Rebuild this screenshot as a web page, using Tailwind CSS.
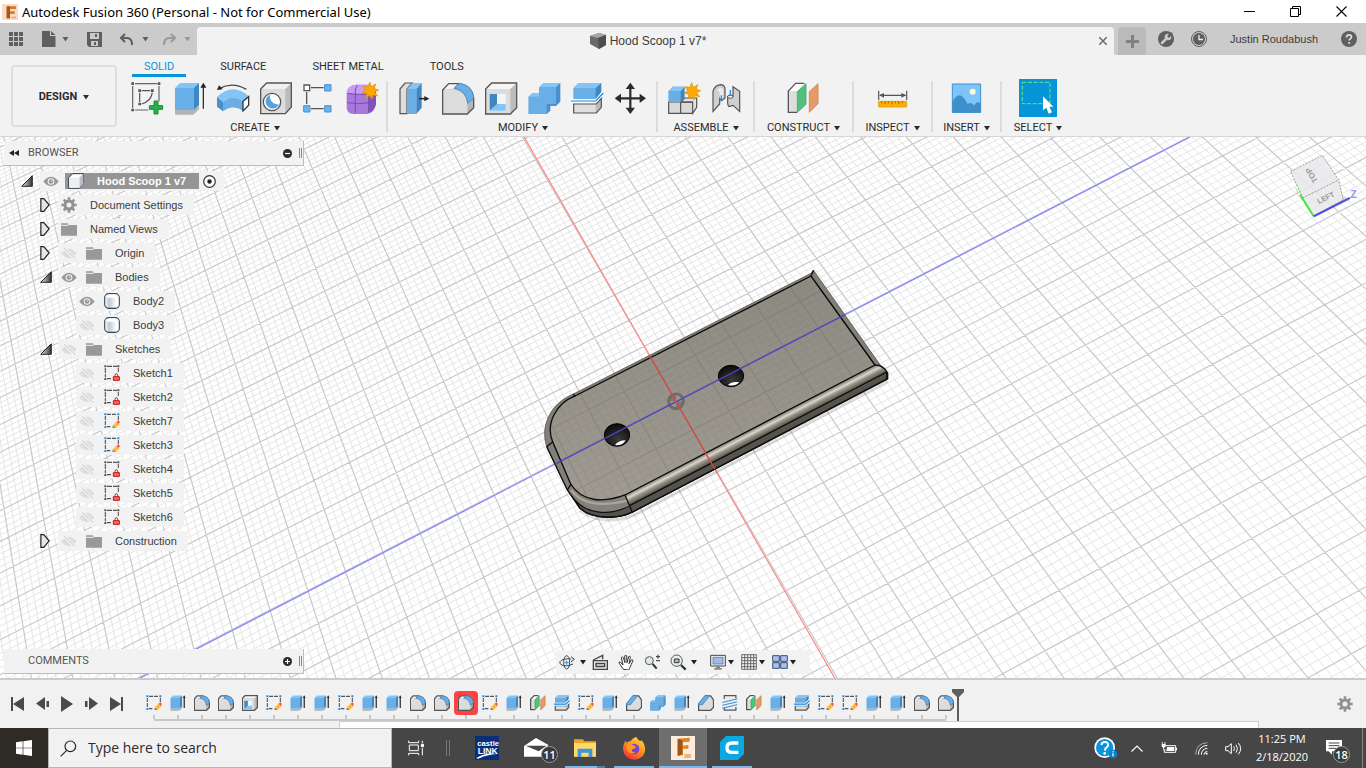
<!DOCTYPE html>
<html lang="en">
<head>
  <meta charset="UTF-8">
  <meta name="viewport" content="width=device-width, initial-scale=1.0">
  <title>Autodesk Fusion 360</title>
  <script src="https://cdn.jsdelivr.net/npm/@tailwindcss/browser@4"></script>
  <style>
    /* keep icon outlines crisp at every icon size */
    symbol * { vector-effect: non-scaling-stroke; }
  </style>
</head>
<body class="h-screen flex flex-col overflow-hidden bg-white font-['Liberation_Sans',Arial,sans-serif] text-[11px] leading-4 text-[#3c3c3c]">

  <!-- Icon set -->
  <svg class="absolute size-0">
    <symbol id="i-caret" viewBox="0 0 6 5"><path d="M0 0h6L3 4.5z" fill="currentColor"/></symbol>

    <symbol id="i-newsketch" viewBox="0 0 99 99">
      <path d="M12 5h66M5 12v66M84 12v46M12 84h40" fill="none" stroke="#666" stroke-width="1.2"/>
      <path d="M1 1h8v8H1zM80 1h8v8h-8zM1 80h8v8H1zM22 22h8v8h-8zM60 22h8v8h-8zM22 62h8v8h-8z" fill="#555"/>
      <path d="M32 26h26M26 32v28M64 32q-4 26-32 34" fill="none" stroke="#555" stroke-width="1.2"/>
      <path d="M69 57h12v14h14v11H81v14H69V82H55V71h14z" fill="#22b14c" stroke="#149036" stroke-width="1"/>
    </symbol>
    <symbol id="i-extrude" viewBox="0 0 99 99">
      <path d="M3 84h55l17-14v12L58 98H3z" fill="#b4b4b4"/>
      <path d="M3 18L18 3h57L59 18z" fill="#84c5f8"/>
      <path d="M3 18h56v66H3z" fill="#6aaee6"/>
      <path d="M59 18L75 3v66L59 84z" fill="#3f87c3"/>
      <path d="M88 12v68" fill="none" stroke="#222" stroke-width="1.2"/><path d="M88 2l-9 15h18z" fill="#222"/>
    </symbol>
    <symbol id="i-revolve" viewBox="0 0 99 99">
      <path d="M6 20Q46-2 88 22" fill="none" stroke="#444" stroke-width="1.3"/><path d="M0 24L6 10l11 12z" fill="#222"/>
      <path d="M0 45Q46 0 95 42L78 58Q46 34 18 60z" fill="#84c5f8"/>
      <path d="M0 45l18 15v28L0 74z" fill="#4a90cc"/>
      <path d="M18 60Q46 34 78 58v28Q46 66 18 88z" fill="#6aaee6"/>
      <path d="M78 58l17-14v26L78 87z" fill="#fff" stroke="#333" stroke-width="1.3"/>
    </symbol>
    <symbol id="i-hole" viewBox="0 0 99 99">
      <path d="M2 21L20 3h74v72L76 95H2z" fill="#bcbcbc"/><path d="M2 21h74v74H2z" fill="#dcdcdc"/><path d="M2 21L20 3h74L76 21z" fill="#f1f1f1"/>
      <path d="M2 21L20 3h74v72L76 95H2z" fill="none" stroke="#555" stroke-width="1.3"/>
      <circle cx="36" cy="60" r="26" fill="#fff" stroke="#555" stroke-width="1.3"/>
      <path d="M30 39a21 21 0 1 0 27 28A24 24 0 0 1 30 39z" fill="#5aa2de"/>
    </symbol>
    <symbol id="i-pattern" viewBox="0 0 99 99">
      <path d="M24 17h38M11 30v36M24 80h38" stroke="#555" stroke-width="1.3"/>
      <path d="M3 9h17v17H3z" fill="#fff" stroke="#555" stroke-width="1.3"/>
      <path d="M65 8h19v19H65zM2 71h19v19H2zM65 71h19v19H65z" fill="#6ab4ee" stroke="#4a90cc" stroke-width="1"/>
    </symbol>
    <symbol id="i-form" viewBox="0 0 99 99">
      <path d="M2 34Q4 10 30 8h34q26 4 26 20v38q-4 26-26 30H24Q4 96 2 78z" fill="#a878dc"/>
      <path d="M2 34Q4 10 30 8h34q22 2 26 18-18 12-34 10H2z" fill="#c79cf5"/>
      <path d="M68 34q18-4 22-12v44q-6 22-22 26z" fill="#8453b8"/>
      <path d="M34 10q-8 10-6 24v60M4 62q36 6 64 0 14-4 20-10M4 34q44 6 64 0v58" fill="none" stroke="#7a4bb0" stroke-width="1"/>
      <path d="M71 0l5 14 13-8-4 14 13 4-12 6 9 12-14-3-3 13-7-12-10 8 1-14-14-2 11-8-8-12 15 2z" fill="#ffa800" stroke="#d88c00" stroke-width=".6"/>
    </symbol>
    <symbol id="i-presspull" viewBox="0 0 99 99">
      <path d="M3 21L18 3h22L24 21v74H3z" fill="#dedede" stroke="#555" stroke-width="1.2"/>
      <path d="M24 21L40 3h28L52 21z" fill="#84c5f8"/><path d="M24 21h28v75H24z" fill="#6aaee6"/><path d="M52 21L68 3v74L52 96z" fill="#3f87c3"/>
      <path d="M60 50h20" stroke="#222" stroke-width="1.5"/><path d="M91 50L76 42v16z" fill="#222"/>
    </symbol>
    <symbol id="i-fillet" viewBox="0 0 99 99">
      <path d="M2 24L20 5h26q44 4 49 44v28L76 96H2z" fill="#b5b5b5"/>
      <path d="M2 24L20 5h26L34 20z" fill="#f4f4f4"/>
      <path d="M2 22h32q40 6 42 46v28H2z" fill="#dcdcdc"/>
      <path d="M2 24L20 5h26q44 4 49 44v28L76 96H2z" fill="none" stroke="#555" stroke-width="1.3"/>
      <path d="M36 18L52 4q38 4 44 44L77 64Q74 28 36 18z" fill="#6aaee6" stroke="#3f87c3" stroke-width=".8"/>
    </symbol>
    <symbol id="i-shell" viewBox="0 0 99 99">
      <path d="M2 21L20 3h75v74L76 96H2z" fill="#bcbcbc"/><path d="M2 21L20 3h75L76 21z" fill="#f6f6f6"/><path d="M2 21h74v75H2z" fill="#dcdcdc"/>
      <path d="M2 21L20 3h75v74L76 96H2z" fill="none" stroke="#555" stroke-width="1.3"/>
      <path d="M14 36h48v50H14z" fill="#f5f5f5"/><path d="M14 36h22v32L14 86z" fill="#3f87c3"/><path d="M14 86l22-20h26v20z" fill="#84c5f8"/>
    </symbol>
    <symbol id="i-combine" viewBox="0 0 99 99">
      <path d="M2 44L14 33h20V16L47 3h50v56L84 72H67v14L56 96H2z" fill="#4a90cc"/>
      <path d="M2 44h32V16h50v50H56v30H2z" fill="#6aaee6"/>
      <path d="M34 16L47 3h50L84 16zM2 44l12-11h20v11z" fill="#84c5f8"/>
    </symbol>
    <symbol id="i-split" viewBox="0 0 99 99">
      <path d="M8 18L23 3h68v26L76 50H8z" fill="#3f87c3"/><path d="M8 18h66v32H8z" fill="#6aaee6"/><path d="M8 18L23 3h68L74 18z" fill="#84c5f8"/>
      <path d="M8 66h68l15-17v27L76 93H8z" fill="#bcbcbc"/><path d="M8 66h66v27H8z" fill="#dedede"/>
      <path d="M8 66h68l15-17v27L76 93H8z" fill="none" stroke="#555" stroke-width="1.2"/>
      <path d="M0 57h74l23-24" fill="none" stroke="#fff" stroke-width="3"/><path d="M0 57h74l23-24" fill="none" stroke="#0a84ea" stroke-width="1.2"/>
    </symbol>
    <symbol id="i-move" viewBox="0 0 99 99">
      <path d="M49 14v70M14 49h70" stroke="#2b2b2b" stroke-width="2.2"/>
      <path d="M49 2l14 19H35zM49 96l14-19H35zM2 49l19-14v28zM96 49L77 35v28z" fill="#2b2b2b"/>
    </symbol>
    <symbol id="i-chamfer" viewBox="0 0 99 99">
      <path d="M4 56L46 6h32l18 24v46L78 95H4z" fill="#dcdcdc" stroke="#555" stroke-width="1.3"/>
      <path d="M4 52L42 4h30L28 60H4z" fill="#6aaee6" stroke="#3f87c3" stroke-width=".8"/>
    </symbol>
    <symbol id="i-thread" viewBox="0 0 99 99">
      <path d="M14 4h72v90H14z" fill="#ececec"/><path d="M14 24V4h72v16M14 78v16h72V74" fill="none" stroke="#555" stroke-width="1.2"/>
      <path d="M2 46l92-22M2 64l92-22M2 82l92-22" stroke="#2f8fe0" stroke-width="1"/>
    </symbol>
    <symbol id="i-component" viewBox="0 0 99 99">
      <path d="M2 60h82V76L72 94H2z" fill="#dadada" stroke="#555" stroke-width="1.2"/><path d="M38 60l12-12h36v28L74 94V60z" fill="#e4e4e4" stroke="#555" stroke-width="1.2"/><path d="M38 60v34M38 60h36" stroke="#555" stroke-width="1.2"/>
      <path d="M2 28L14 14h36v32L38 60H2z" fill="#3f87c3"/><path d="M2 28h36v32H2z" fill="#6aaee6"/><path d="M2 28l12-14h36L38 28z" fill="#84c5f8"/>
      <path d="M71 2l5 14 13-8-4 14 13 4-12 6 9 12-14-3-3 13-7-12-10 8 1-14-14-2 11-8-8-12 15 2z" fill="#ffa800" stroke="#d88c00" stroke-width=".6"/>
    </symbol>
    <symbol id="i-joint" viewBox="0 0 99 99">
      <path d="M6 28Q12 8 30 8q12 2 12 14v26l-10 8-6-8v18L6 88z" fill="#cfcfcf" stroke="#555" stroke-width="1.2"/>
      <path d="M18 24Q26 14 36 20v26l-10 4V30z" fill="#ececec"/>
      <path d="M66 14l20 14v60L66 70l-12 4q-4-4-4-10V44q6-6 16-2z" fill="#cfcfcf" stroke="#555" stroke-width="1.2"/>
      <ellipse cx="58" cy="44" rx="8" ry="5" fill="#f2f2f2" stroke="#555" stroke-width="1"/>
      <path d="M31 40v18M58 24v18" stroke="#2f8fe0" stroke-width="1.4"/>
    </symbol>
    <symbol id="i-construct" viewBox="0 0 99 99">
      <path d="M4 27L26 4h26L32 27v64H4z" fill="#dedede"/><path d="M4 27L26 4h26L32 27z" fill="#fff"/><path d="M52 4H26L4 27v64h26" fill="none" stroke="#555" stroke-width="1.3"/>
      <path d="M31 29L57 5v62L31 91z" fill="#55c07c" stroke="#3aa864" stroke-width=".8"/>
      <path d="M67 29L93 5v60L67 91z" fill="#e69a6a" stroke="#d07f48" stroke-width=".8"/>
    </symbol>
    <symbol id="i-measure" viewBox="0 0 99 99">
      <path d="M8 26v28M92 26v28M12 40h76" stroke="#555" stroke-width="1.2"/><path d="M9 40l15-7v14zM91 40l-15-7v14z" fill="#555"/>
      <path d="M8 58h84v17H8z" fill="#ffb000" stroke="#e09500" stroke-width=".8"/>
      <path d="M17 58v6M27 58v9M37 58v6M48 58v9M58 58v6M68 58v9M79 58v6" stroke="#7a5200" stroke-width=".8"/>
    </symbol>
    <symbol id="i-picture" viewBox="0 0 99 99">
      <path d="M7 6h85v85H7z" fill="#7cc4fa"/><circle cx="68" cy="29" r="9" fill="#fffbd0"/>
      <path d="M7 60q10-20 22-20 12 2 24 26 8-6 14-1l6 5q8-12 12-10l7 5v27H7z" fill="#3e90cc"/>
      <path d="M7 6h85v85H7z" fill="none" stroke="#3e90cc" stroke-width="1"/>
    </symbol>
    <symbol id="i-sketch" viewBox="0 0 48 48">
      <path d="M9 4h30M4 9v28M43 9v14M9 41h10" stroke="#555" stroke-width="1.1" stroke-dasharray="4 1"/>
      <path d="M1 1h6v6H1zM40 1h6v6h-6zM1 39h6v6H1z" fill="#1e8fe8"/>
      <path d="M25 45l2-9 9 9z" fill="#888"/><path d="M27 37l12-12 8 8-12 12z" fill="#ffb73e"/><path d="M38 26l5-4 5 5-4 5z" fill="#ee4d5a"/>
    </symbol>
    <symbol id="i-locked" viewBox="0 0 48 48">
      <path d="M9 4h30M4 9v28M43 9v12M9 41h12" stroke="#555" stroke-width="1.1" stroke-dasharray="5 1"/>
      <path d="M1 1h6v6H1zM40 1h6v6h-6zM1 39h6v6H1z" fill="#555"/>
      <path d="M33 35v-4q0-5 4-5t4 5v4" fill="none" stroke="#c22" stroke-width="1"/><path d="M28 35h18v11H28z" fill="#e07070" stroke="#c11" stroke-width="1"/>
    </symbol>
    <symbol id="i-body" viewBox="0 0 48 48">
      <rect x="2" y="2" width="44" height="44" rx="12" fill="url(#bodyGrad)" stroke="#33475c" stroke-width="1.1"/><path d="M5 12q19 6 38 0-3-8-11-8H16Q8 4 5 12z" fill="#fff"/>
    </symbol>
    <symbol id="i-folder" viewBox="0 0 48 40"><path d="M0 3h20l4 5h24v32H0z" fill="#999"/><path d="M0 9h22l3-4" fill="none" stroke="#f2f2f2" stroke-width="1"/></symbol>
    <symbol id="i-gear" viewBox="0 0 48 48">
      <circle cx="24" cy="24" r="12" fill="none" stroke="#919191" stroke-width="3"/>
      <path d="M24 1v9M24 38v9M1 24h9M38 24h9M8 8l6 6M34 34l6 6M40 8l-6 6M14 34l-6 6" stroke="#919191" stroke-width="2.6"/>
    </symbol>
    <symbol id="i-eye" viewBox="0 0 48 32">
      <path d="M1 16Q12 2 24 2t23 14Q36 30 24 30T1 16z" fill="#999"/><circle cx="24" cy="16" r="10" fill="#f2f2f2"/><circle cx="24" cy="16" r="7" fill="#999"/><circle cx="26" cy="14" r="2" fill="#f2f2f2"/>
    </symbol>
    <symbol id="i-eyeoff" viewBox="0 0 48 32">
      <path d="M1 16Q12 2 24 2t23 14Q36 30 24 30T1 16z" fill="#dedede"/><path d="M14 1l32 30M6 1l32 30" stroke="#f2f2f2" stroke-width="1.3"/><path d="M9 0l34 31" stroke="#ccc" stroke-width="1"/>
    </symbol>
    <linearGradient id="bodyGrad"><stop offset="0" stop-color="#fff"/><stop offset=".3" stop-color="#c4cad2"/><stop offset=".8" stop-color="#fff"/></linearGradient>
    <linearGradient id="openGrad"><stop offset="0" stop-color="#eee"/><stop offset="1" stop-color="#333"/></linearGradient>
    <symbol id="i-open" viewBox="0 0 33 33"><path d="M31 2v29H2z" fill="url(#openGrad)" stroke="#222" stroke-width="1"/></symbol>
    <symbol id="i-closed" viewBox="0 0 27 39"><path d="M2 2h8l15 17-15 18H2z" fill="#e6e6ea" stroke="#222" stroke-width="1.2"/></symbol>
  </svg>

  <!-- Title bar -->
  <header class="h-[23px] shrink-0 flex items-center bg-white text-black">
    <svg class="ml-[2px] size-4" viewBox="0 0 48 48"><path d="M0 0h48v48H0z" fill="#f9dcc4"/><path d="M14 7h28v8H24v7h14v8H24v13H14z" fill="#d57a2a"/><path d="M14 7h10v36H14z" fill="#a85518"/><path d="M28 38h14v5H28z" fill="#e9a877"/></svg>
    <h1 class="ml-1 text-[13px] font-['Noto_Sans','Open_Sans',sans-serif]">Autodesk Fusion 360 (Personal - Not for Commercial Use)</h1>
    <div class="ml-auto mr-[2px] flex h-full">
      <button aria-label="Minimize" class="w-[46px] grid place-items-center"><svg class="size-[11px]" viewBox="0 0 11 11"><path d="M0 5.5h11" stroke="#000"/></svg></button>
      <button aria-label="Restore" class="w-[46px] grid place-items-center"><svg class="size-[11px]" viewBox="0 0 11 11"><path d="M.5 2.5h8v8h-8zM2.500 2.500v-2h8v8h-2" fill="none" stroke="#000"/></svg></button>
      <button aria-label="Close" class="w-[46px] grid place-items-center"><svg class="size-[11px]" viewBox="0 0 11 11"><path d="M.5.5l10 10M10.500.5l-10 10" stroke="#000" stroke-width="1.1"/></svg></button>
    </div>
  </header>

  <!-- Quick access and document tab -->
  <div class="h-8 shrink-0 flex bg-[#cbcbcb] text-[#5f5f5f]">
    <div class="w-[197px] flex items-center">
      <button aria-label="Data panel" class="ml-[9px]"><svg class="block size-[15px]" viewBox="0 0 15 15"><path d="M0 0h4v4H0zM5 0h4v4H5zM10 0h4v4h-4zM0 5h4v4H0zM5 5h4v4H5zM10 5h4v4h-4zM0 10h4v4H0zM5 10h4v4H5zM10 10h4v4h-4z" fill="currentColor"/></svg></button>
      <button aria-label="File" class="ml-[18px] flex items-center gap-[6px]"><svg class="w-[14px] h-4" viewBox="0 0 14 16"><path d="M0 0h8v5h5.500v11H0zM9 0l4.500 4H9z" fill="currentColor"/></svg><svg class="w-[7px] h-[5px]"><use href="#i-caret"/></svg></button>
      <button aria-label="Save" class="ml-[18px]"><svg class="block size-[15px]" viewBox="0 0 15 15"><path d="M0 0h15v15H2l-2-2zM3 1v6h9V1zM4 9v5h7V9z" fill="currentColor" fill-rule="evenodd"/><path d="M7 10h2v3H7zM8 2h2v3H8z" fill="currentColor"/></svg></button>
      <button aria-label="Undo" class="ml-[18px] flex items-center gap-[8px]"><svg class="w-[14px] h-[13px]" viewBox="0 0 14 13"><path d="M5 1L1 5l4 4M1.500 5H7q5 0 5 7" fill="none" stroke="currentColor" stroke-width="2"/></svg><svg class="w-[7px] h-[5px]"><use href="#i-caret"/></svg></button>
      <button aria-label="Redo" class="ml-[13px] flex items-center gap-[8px] text-[#999]"><svg class="w-[14px] h-[13px]" viewBox="0 0 14 13"><path d="M9 1l4 4-4 4M12.500 5H7q-5 0-5 7" fill="none" stroke="currentColor" stroke-width="2"/></svg><svg class="w-[7px] h-[5px]"><use href="#i-caret"/></svg></button>
    </div>
    <div class="mt-1 flex-1 flex items-center rounded-t bg-[#f2f2f2]">
      <div class="flex-1 flex items-center justify-center gap-1 text-[12px] text-[#3c3c3c]">
        <svg class="size-4" viewBox="0 0 16 16"><path d="M0 3l9-3 7 2v10l-7 4-9-5z" fill="#6a6a6a"/><path d="M0 3l9-3 7 2-8 3z" fill="#a5a5a5"/><path d="M8 5l8-3v10l-7 4z" fill="#4d4d4d"/></svg>
        <span>Hood Scoop 1 v7*</span>
      </div>
      <button aria-label="Close tab" class="mr-[7px]"><svg class="block size-2" viewBox="0 0 8 8"><path d="M0 0l8 8M8 0L0 8" stroke="#6b6b6b" stroke-width="1.5"/></svg></button>
    </div>
    <button aria-label="New tab" class="ml-1 mt-1 w-7 grid place-items-center rounded-t bg-[#bababa]"><svg class="size-[13px]" viewBox="0 0 13 13"><path d="M6.500 0v13M0 6.500h13" stroke="#818181" stroke-width="3"/></svg></button>
    <div class="flex items-center">
      <button aria-label="Extensions" class="ml-3"><svg class="block size-4" viewBox="0 0 16 16"><circle cx="8" cy="8" r="8" fill="currentColor"/><path d="M4 12l5-5" stroke="#cbcbcb" stroke-width="2.500" stroke-linecap="round"/><circle cx="10" cy="6" r="3.300" fill="#cbcbcb"/><path d="M10 6l4-4" stroke="#5f5f5f" stroke-width="2.500"/></svg></button>
      <button aria-label="Job status" class="ml-[17px]"><svg class="block size-4" viewBox="0 0 16 16"><circle cx="8" cy="8" r="7.500" fill="none" stroke="currentColor"/><circle cx="8" cy="8" r="6" fill="currentColor"/><path d="M8 4v4.500h4" fill="none" stroke="#eee" stroke-width="1.300"/></svg></button>
      <button class="ml-[23px] w-[88px] text-left whitespace-nowrap text-[#3c3c3c]">Justin Roudabush</button>
      <button aria-label="Help" class="ml-[23px] mr-[9px]"><svg class="block size-4" viewBox="0 0 16 16"><circle cx="8" cy="8" r="8" fill="currentColor"/><path d="M5.500 6.500q0-2.700 2.500-2.700t2.500 2.200c0 1.600-2.300 1.700-2.300 3.600" fill="none" stroke="#ddd" stroke-width="1.700"/><circle cx="8.200" cy="12" r="1.100" fill="#ddd"/></svg></button>
    </div>
  </div>

  <!-- Ribbon -->
  <div class="h-[82px] shrink-0 flex bg-[#f2f2f2] border-b border-[#d6d6d6] text-[#2b2b2b] font-[Roboto,'Liberation_Sans',sans-serif]">
    <button class="ml-[11px] mt-[10px] w-[106px] h-[62px] pt-[2px] flex items-center justify-center gap-[6px] rounded border-2 border-[#dedede] font-bold">DESIGN <svg class="w-[6px] h-[5px]"><use href="#i-caret"/></svg></button>
    <div>
      <nav class="ml-[15px] h-[22px] flex gap-[22px]">
        <button class="px-[12px] pt-[4px] border-b-[3px] border-[#0696d7] text-[#0696d7]">SOLID</button>
        <button class="px-[12px] pt-[4px] border-b-[3px] border-transparent">SURFACE</button>
        <button class="px-[12px] pt-[4px] border-b-[3px] border-transparent">SHEET METAL</button>
        <button class="px-[12px] pt-[4px] border-b-[3px] border-transparent">TOOLS</button>
      </nav>
      <div id="ribbon" class="flex"></div>
    </div>
  </div>

  <!-- Canvas -->
  <main class="relative flex-1 min-h-0 overflow-hidden bg-white">
    <svg class="absolute inset-0 size-full" viewBox="0 137 1366 541" preserveAspectRatio="xMidYMid slice">
      <defs>
        <clipPath id="topFace"><path d="M843 48L1035 315 285 705C220 730 155 725 122 672L68 545C45 490 80 430 135 408z"/></clipPath>
        <clipPath id="bodyClip"><path d="M850 30L1058 325l15 13v19L310 755C265 778 190 780 150 745L112 690 50 560C30 500 60 430 130 402L843 40z"/></clipPath>
        <linearGradient id="faceGrad" x1="0" y1="0" x2="0" y2="1"><stop offset="0" stop-color="#8d8a82"/><stop offset="1" stop-color="#9f9b92"/></linearGradient>
        <linearGradient id="edgeGrad" gradientUnits="userSpaceOnUse" x1="660" y1="510" x2="674" y2="537"><stop offset="0" stop-color="#787469"/><stop offset=".4" stop-color="#dcd7cc"/><stop offset=".65" stop-color="#9a958a"/><stop offset="1" stop-color="#68655d"/></linearGradient>
        <radialGradient id="holeGrad" cx=".55" cy=".7" r=".7"><stop offset="0" stop-color="#3a3a38"/><stop offset="1" stop-color="#0a0a0a"/></radialGradient>
      </defs>
      <path id="gridMinor" fill="none" stroke="#e6e6e6"/>
      <path id="gridMajor" fill="none" stroke="#c9c9c9" stroke-width="1.200"/>
      <path d="M140 678L1190 137" stroke="#8686ff" stroke-width="1.300"/>
      <path d="M523 135L837 682" stroke="#ff8686" stroke-width="1.200"/>

      <!-- Hood scoop solid -->
      <g transform="translate(530 260) scale(.3333)" stroke-linejoin="round">
        <path d="M1073 364L316 764Q220 800 150 752" fill="none" stroke="#000" stroke-opacity=".12" stroke-width="10"/>
        <path d="M850 30L1058 325l15 13v19L310 755C265 778 190 780 150 745L112 690 50 560C30 500 60 430 130 402L843 40z" fill="#827f76" stroke="#444" stroke-width="2"/>
        <path d="M1070 336v21L310 755C265 778 190 780 150 745L125 705C160 765 240 770 298 737z" fill="#55534c" stroke="#111" stroke-width="4"/>
        <path d="M1035 315q25 0 35 21L298 737l-13-32z" fill="url(#edgeGrad)"/>
        <path d="M285 705l13 32C240 762 170 765 125 705L122 672C155 725 220 730 285 705z" fill="#85817a"/>
        <path d="M124 690Q165 752 292 722" fill="none" stroke="#aaa69b" stroke-width="7"/>
        <path d="M843 48L1035 315 285 705C220 730 155 725 122 672L68 545C45 490 80 430 135 408z" fill="url(#faceGrad)"/>
        <g clip-path="url(#topFace)">
          <g transform="scale(3) translate(-530 -260)" opacity=".1">
            <use href="#gridMinor" style="filter:brightness(.4)"/>
            <use href="#gridMajor" style="filter:brightness(.1)"/>
          </g>
        </g>
        <path d="M843 48L1035 315 285 705C220 730 155 725 122 672L68 545C45 490 80 430 135 408z" fill="none" stroke="#0a0a0a" stroke-width="4"/>
        <path d="M1035 315q25 0 38 24v18L310 755C265 778 190 780 150 745L112 690 50 560" fill="none" stroke="#111" stroke-width="4"/>
        <path d="M285 705l22 52M50 560l18-14M112 690l12-18M843 48l8-17M130 402l6 8M1070 336L298 737" fill="none" stroke="#111" stroke-width="4"/>
        <g fill="url(#holeGrad)" stroke="#000" stroke-width="3"><ellipse cx="603" cy="348" rx="38" ry="32"/><ellipse cx="261" cy="525" rx="38" ry="34"/></g>
        <path d="M594 375q12-12 34-8-14 14-34 8zM255 555q10-14 32-14-10 18-32 14z" fill="#fff"/>
        <circle cx="438" cy="424" r="22" fill="#7e7b74" stroke="#6e6b65" stroke-width="9"/>
        <path d="M438 424v-18a18 18 0 0 1 18 18zM438 424v18a18 18 0 0 1-18-18z" fill="#98958c"/>
        <g clip-path="url(#bodyClip)">
          <path d="M-1170 1254L1980-369" stroke="#4a45c4" stroke-width="4"/>
          <path d="M-21-375L921 1266" stroke="#dc4545" stroke-width="4"/>
        </g>
      </g>

      <!-- View cube -->
      <g transform="translate(1060 0) scale(.3333)">
        <path d="M764 652L870 600 850 588z" fill="#000" fill-opacity=".12"/>
        <path d="M692 514L787 466 836 540 850 600 760 648 728 594z" fill="#e9e9ec" fill-opacity=".85"/>
        <path d="M692 514L787 466 836 540 850 600 760 648 728 594zM728 594L836 540" fill="none" stroke="#888" stroke-width="2.500" stroke-dasharray="6 4"/>
        <path d="M720 584L761 649" stroke="#3fe83f" stroke-width="6"/>
        <path d="M761 649L870 594" stroke="#4b4be8" stroke-width="6"/>
        <text x="871" y="595" font-size="32" font-weight="700" fill="#9494f5">Z</text>
        <text x="704" y="578" font-size="22" fill="#86e886">Y</text>
        <text transform="translate(776 612) rotate(-26)" font-size="22" font-weight="700" fill="#999">LEFT</text>
        <text transform="translate(775 542) rotate(-122)" font-size="24" font-weight="700" fill="#999">TOP</text>
      </g>
    </svg>

    <!-- Browser tree -->
    <aside class="absolute left-1 top-1 w-[300px]">
      <div class="h-[25px] flex items-center bg-[#f2f2f2] border-r border-b border-[#bdbdbd] text-[#555]">
        <button aria-label="Collapse" class="ml-[5px]"><svg class="block w-[10px] h-[6px]" viewBox="0 0 10 6"><path d="M5 0v6L0 3zM10 0v6L5 3z" fill="#222"/></svg></button>
        <h2 class="ml-[9px] font-[Roboto,'Liberation_Sans',sans-serif]">BROWSER</h2>
        <button aria-label="Display settings" class="ml-auto"><svg class="block size-[9px]" viewBox="0 0 9 9"><circle cx="4.500" cy="4.500" r="4.500" fill="#2b2b2b"/><path d="M2 4.500h5" stroke="#fff" stroke-width="1.200"/></svg></button>
        <span class="ml-[7px] mr-[1px] w-[3px] h-[10px] border-x border-[#888]"></span>
      </div>
      <ul id="tree" class="mt-[3px]"></ul>
    </aside>

    <!-- Comments -->
    <aside class="absolute left-1 bottom-1 w-[300px] h-[25px] flex items-center bg-[#f2f2f2] border-r border-b border-[#bdbdbd] text-[#555]">
      <h2 class="ml-6 font-[Roboto,'Liberation_Sans',sans-serif]">COMMENTS</h2>
      <button aria-label="Add comment" class="ml-auto"><svg class="block size-[9px]" viewBox="0 0 9 9"><circle cx="4.500" cy="4.500" r="4.500" fill="#2b2b2b"/><path d="M2 4.500h5M4.500 2v5" stroke="#fff" stroke-width="1.200"/></svg></button>
      <span class="ml-[7px] mr-[1px] w-[3px] h-[10px] border-x border-[#888]"></span>
    </aside>

    <!-- Navigation bar -->
    <div class="absolute left-1/2 -translate-x-1/2 bottom-1 w-[254px] h-6 pl-[3px] flex items-center bg-[#f2f2f2] text-[#222]">
      <button aria-label="Orbit" class="flex items-center gap-[4px]"><svg class="w-[17px] h-4" viewBox="0 0 51 48" fill="none" stroke="#444" stroke-width="3"><ellipse cx="23" cy="25" rx="9" ry="20"/><path d="M40 16Q30 12 14 16-4 22 6 32q14 8 36-2"/><path d="M36 8l10 8-10 8" fill="#ddd"/><path d="M23 20v12M17 26h12" stroke="#1e8fe8"/></svg><svg class="w-[6px] h-[5px]"><use href="#i-caret"/></svg></button>
      <button aria-label="Look at" class="ml-[6px]"><svg class="block size-4" viewBox="0 0 48 48" fill="#eee" stroke="#444" stroke-width="4"><path d="M4 18L32 4v12M4 20h42v26H4z"/><path d="M12 28h26v10H12z" fill="#bbb"/></svg></button>
      <button aria-label="Pan" class="ml-[10px]"><svg class="block size-4" viewBox="0 0 48 48"><path d="M16 46L4 28q-3-6 4-3l7 8-5-22q3-6 6 0l5 15-1-20q3-6 6 0l1 20 5-18q5-4 5 2l-4 19 7-11q5-2 5 2-6 12-9 20l-4 8z" fill="#fff" stroke="#333" stroke-width="3" stroke-linejoin="round"/></svg></button>
      <button aria-label="Zoom" class="ml-[10px]"><svg class="block size-4" viewBox="0 0 48 48"><circle cx="16" cy="20" r="12" fill="#dceaf0" stroke="#555" stroke-width="3"/><path d="M26 30l12 14" stroke="#333" stroke-width="6"/><path d="M42 2v12M36 8h12M36 20h12" stroke="#333" stroke-width="3"/></svg></button>
      <button aria-label="Fit" class="ml-[10px] flex items-center gap-[4px]"><svg class="size-[17px]" viewBox="0 0 51 51"><circle cx="20" cy="20" r="17" fill="#e6eef2" stroke="#555" stroke-width="3"/><path d="M13 15h14v11H13z" fill="#bbb" stroke="#333" stroke-width="3"/><path d="M33 33l14 14" stroke="#333" stroke-width="7"/></svg><svg class="w-[6px] h-[5px]"><use href="#i-caret"/></svg></button>
      <button aria-label="Display" class="ml-[13px] flex items-center gap-[2px]"><svg class="w-4 h-4" viewBox="0 0 48 48"><path d="M2 4h44v32H2z" fill="#eee" stroke="#444" stroke-width="3"/><path d="M9 10h30v20H9z" fill="#9fbbe8" stroke="#4b689a" stroke-width="2"/><path d="M18 37h12v5h5v5H13v-5h5z" fill="#888"/></svg><svg class="w-[6px] h-[5px]"><use href="#i-caret"/></svg></button>
      <button aria-label="Grid" class="ml-[7px] flex items-center gap-[2px]"><svg class="w-4 h-4" viewBox="0 0 48 48"><path d="M2 2h44v44H2zM11 2v44M20 2v44M29 2v44M38 2v44M2 11h44M2 20h44M2 29h44M2 38h44" fill="#eee" stroke="#555" stroke-width="2.500"/></svg><svg class="w-[6px] h-[5px]"><use href="#i-caret"/></svg></button>
      <button aria-label="Viewports" class="ml-[7px] flex items-center gap-[2px]"><svg class="w-4 h-4" viewBox="0 0 48 48"><path d="M2 5h20v17H2zM26 5h20v17H26zM2 26h20v17H2zM26 26h20v17H26z" fill="#a9c0ea" stroke="#3e4f78" stroke-width="3"/></svg><svg class="w-[6px] h-[5px]"><use href="#i-caret"/></svg></button>
    </div>
  </main>

  <!-- Timeline -->
  <section class="relative h-[50px] shrink-0 flex border-t-2 border-[#cbcbcb] bg-[#f1f1f1]">
    <div class="w-[142px] h-[47px] pl-[11px] flex items-center gap-[12px] text-[#4a4a4a]">
      <button aria-label="Start"><svg class="block w-[13px] h-[14px]" viewBox="0 0 13 14"><path d="M0 0h2v14H0zM13 0v14L2 7z" fill="currentColor"/></svg></button>
      <button aria-label="Step back"><svg class="block w-[13px] h-[13px]" viewBox="0 0 13 13"><path d="M9 0v13L0 6.500zM10.500 4H13v6h-2.500z" fill="currentColor"/></svg></button>
      <button aria-label="Play"><svg class="block w-[12px] h-4" viewBox="0 0 12 16"><path d="M0 0l12 8-12 8z" fill="currentColor"/></svg></button>
      <button aria-label="Step forward"><svg class="block w-[13px] h-[13px]" viewBox="0 0 13 13"><path d="M4 0l9 6.500L4 13zM0 4h2.500v6H0z" fill="currentColor"/></svg></button>
      <button aria-label="End"><svg class="block w-[13px] h-[14px]" viewBox="0 0 13 14"><path d="M11 0h2v14h-2zM0 0l11 7L0 14z" fill="currentColor"/></svg></button>
    </div>
    <div id="timeline" class="pt-[11px] flex"></div>
    <svg class="mt-[9px] w-3 h-8 -ml-[6px]" viewBox="0 0 12 32"><path d="M0 0h12v3L7 8v24H5V8L0 3z" fill="#5e5e5e"/></svg>
    <button aria-label="Timeline settings" class="ml-auto mr-[13px] h-[47px]"><svg class="block size-4"><use href="#i-gear"/></svg></button>
    <div class="absolute left-[339px] right-[107px] bottom-0 h-[7px] border border-b-0 border-[#cfcfcf] bg-white"></div>
  </section>

  <!-- Taskbar -->
  <footer class="h-10 shrink-0 flex bg-[#464646] text-white font-['Open_Sans','Noto_Sans',sans-serif]">
    <button aria-label="Start menu" class="w-12 grid place-items-center bg-[#2e2b27]"><svg class="size-4" viewBox="0 0 48 48"><path d="M0 7l20-3v19H0zM22 4l26-4v23H22zM0 25h20v19L0 41zM22 25h26v23l-26-4z" fill="#fff"/></svg></button>
    <label class="w-[344px] flex items-center border border-[#b5b5b5] bg-[#f2f2f2] pl-[11px]">
      <svg class="size-[17px]" viewBox="0 0 51 51"><circle cx="31" cy="19" r="16" fill="none" stroke="#222" stroke-width="3.500"/><path d="M20 31L2 49" stroke="#222" stroke-width="3.500"/></svg>
      <input type="text" aria-label="Search" placeholder="Type here to search" class="ml-[11px] w-[280px] bg-transparent text-[14px] leading-5 placeholder:text-[#2b2b2b] outline-none">
    </label>
    <button aria-label="Task view" class="w-12 grid place-items-center"><svg class="size-4" viewBox="0 0 48 48" fill="none" stroke="#fff" stroke-width="3"><path d="M2 2v6h30V2M4 15h27v17H4zM2 46v-6h30v6M43 2v8M43 24v22"/><path d="M40 13h7v7h-7z" fill="#fff"/></svg></button>
    <span class="self-center ml-[6px] w-1 h-4 border-x border-[#777]"></span>
    <div class="ml-[13px] flex gap-px">
      <button aria-label="CastleLink" class="w-12 grid place-items-center"><svg class="size-6" viewBox="0 0 72 72"><path d="M0 0h72v72H0z" fill="#0a2f78"/><g fill="#fff" font-family="Liberation Sans" font-weight="700"><text x="7" y="29" font-size="23">castle</text><text x="8" y="53" font-size="26">LINK</text></g><path d="M3 67Q30 47 70 54q-30 0-60 14z" fill="#fff"/></svg></button>
      <button aria-label="Mail" class="relative w-12 grid place-items-center"><svg class="w-6 h-5" viewBox="0 0 72 60"><path d="M0 24L36 0l36 20v36H0z" fill="#fff"/><path d="M5 23h62L44 40z" fill="#464646"/></svg><span class="absolute left-[29px] top-[18px] size-[17px] rounded-full border border-[#999] bg-[#3a3a3a] text-[11px] leading-[15px] text-center font-semibold">11</span></button>
      <button aria-label="File Explorer" class="relative w-12 grid place-items-center"><svg class="w-[22px] h-5" viewBox="0 0 66 60"><path d="M0 4h26l6 6h34v46H0z" fill="#e8a92a"/><path d="M0 15h66v41H0z" fill="#ffd868"/><path d="M11 32h44v25H44V44H22v13H11z" fill="#3c96dd"/></svg><span class="absolute bottom-0 left-1 w-8 h-[2px] bg-[#76b9ed]"></span><span class="absolute bottom-0 left-9 w-2 h-[2px] bg-[#557fa0]"></span></button>
      <button aria-label="Firefox" class="relative w-12 grid place-items-center"><svg class="size-6" viewBox="0 0 72 72"><defs><linearGradient id="fox" x1=".8" y1="0" x2=".2" y2="1"><stop offset="0" stop-color="#ffe03a"/><stop offset=".5" stop-color="#ff8a1c"/><stop offset="1" stop-color="#f0264e"/></linearGradient></defs><path d="M42 2q6 10 14 14l2-4q14 16 11 34-6 24-32 25Q6 69 3 40 3 24 12 13l1 8q6-6 13-6 4-8 16-13z" fill="url(#fox)"/><circle cx="36" cy="39" r="16" fill="#7542e4"/><path d="M14 26q10-6 20 2 6 2 8 6-4 6-12 6-4 10 12 10-22 8-28-10z" fill="#ff9a1c"/></svg><span class="absolute bottom-0 left-1 w-10 h-[2px] bg-[#76b9ed]"></span></button>
      <button aria-label="Fusion 360" class="relative w-12 grid place-items-center bg-[#6e6e6e]"><svg class="size-6" viewBox="0 0 72 72"><path d="M0 0h72v72H0z" fill="#fdebdc"/><path d="M20 8l36-3v12l-20 2v10l16-2v11H36v20l-16 2z" fill="#d9852c"/><path d="M20 8l14 4v42l-14 6z" fill="#9c5417"/><text x="38" y="66" font-size="13" font-weight="700" fill="#e58a3c">360</text></svg><span class="absolute bottom-0 inset-x-0 h-[2px] bg-[#76b9ed]"></span></button>
      <button aria-label="Cura" class="relative w-12 grid place-items-center"><svg class="size-6" viewBox="0 0 72 72"><path d="M18 0h54v54L54 72H0V18z" fill="#0ca8e2"/><path d="M55 21H36q-15 0-15 14t15 14h19" fill="none" stroke="#fff" stroke-width="10"/></svg><span class="absolute bottom-0 left-1 w-10 h-[2px] bg-[#76b9ed]"></span></button>
    </div>
    <div class="ml-auto flex items-center">
      <button aria-label="Support" class="mr-[13px]"><svg class="block w-6 h-[22px]" viewBox="0 0 72 66"><circle cx="32" cy="32" r="31" fill="#fff"/><circle cx="32" cy="32" r="26" fill="#0a94dc"/><path d="M22 24q2-10 12-9 10 2 8 11-2 5-8 9l-1 6" fill="none" stroke="#fff" stroke-width="6"/><circle cx="32" cy="49" r="4" fill="#fff"/><circle cx="57" cy="51" r="13" fill="#0a7fd0"/><path d="M57 49v9M57 43v3" stroke="#fff" stroke-width="4"/></svg></button>
      <button aria-label="Show hidden icons" class="mr-[18px]"><svg class="block w-3 h-[7px]" viewBox="0 0 12 7"><path d="M.5 6.500L6 1l5.500 5.500" fill="none" stroke="#fff" stroke-width="1.200"/></svg></button>
      <button aria-label="Battery" class="mr-[18px]"><svg class="block w-4 h-3" viewBox="0 0 48 36"><path d="M14 11h30v20H10v-8" fill="none" stroke="#fff" stroke-width="3"/><path d="M18 15h22v12H16zM45 17h3v8h-3zM2 6h12v8l-6 4-6-4z" fill="#fff"/><path d="M4 0v6M12 0v6M8 16v8h6" fill="none" stroke="#fff" stroke-width="2.500"/></svg></button>
      <button aria-label="Network" class="mr-[17px]"><svg class="block size-[13px]" viewBox="0 0 39 39" fill="none" stroke="#fff" stroke-width="3"><path d="M2 38Q3 4 37 2" stroke="#aaa"/><path d="M10 38q1-26 27-28M19 38q1-18 18-19M27 38q1-9 10-10"/><circle cx="35" cy="35" r="2" fill="#fff"/></svg></button>
      <button aria-label="Volume" class="mr-[13px]"><svg class="block w-[17px] h-[13px]" viewBox="0 0 51 39" fill="none" stroke="#fff" stroke-width="3"><path d="M2 14h7l10-9v30L9 26H2zM26 13q5 7 0 14M33 8q9 12 0 24M40 3q14 17 0 34"/></svg></button>
      <time class="w-[54px] text-[11px] leading-[18px] whitespace-nowrap flex flex-col items-center"><span>11:25 PM</span><span>2/18/2020</span></time>
      <button aria-label="Notifications" class="relative ml-[17px] mr-[11px] h-10 w-[25px]"><svg class="absolute left-0 top-3 w-4 h-[15px]" viewBox="0 0 48 45"><path d="M0 0h48v34H18v10L8 34H0z" fill="#fff"/><path d="M8 9h32M8 17h32M8 25h22" stroke="#444" stroke-width="3"/></svg><span class="absolute left-[7px] top-[18px] size-[17px] rounded-full border border-[#999] bg-[#3a3a3a] text-[11px] leading-[15px] text-center font-semibold">18</span></button>
      <span class="w-1 h-10 border-l border-[#888]"></span>
    </div>
  </footer>

  <script>
    // Ribbon groups: label, icons, width and padding of the group
    const groups = [
      ["CREATE", ["newsketch", "extrude", "revolve", "hole", "pattern", "form"], "pl-[14px] pr-[7px]"],
      ["MODIFY", ["presspull", "fillet", "shell", "combine", "split", "move"], "pl-[11px] pr-[9px]"],
      ["ASSEMBLE", ["component", "joint"], "pl-[10px] pr-[9px]"],
      ["CONSTRUCT", ["construct"], "w-[97px]"],
      ["INSPECT", ["measure"], "w-[77px]"],
      ["INSERT", ["picture"], "w-[67px]"],
    ];
    const caret = '<svg class="w-[6px] h-[5px]"><use href="#i-caret"/></svg>';
    const separator = '<span class="mt-1 w-[2px] h-[51px] bg-[#dcdcdc]"></span>';
    const label = (text) => `<button class="mt-[3px] flex items-center gap-1">${text} ${caret}</button>`;
    document.getElementById("ribbon").innerHTML = groups.map(([name, icons, size]) => `
      <div class="pt-[2px] flex flex-col items-center ${size}">
        <div class="h-[38px] flex items-center gap-[10px]">
          ${icons.map((i) => `<button aria-label="${i}"><svg class="block size-[33px]"><use href="#i-${i}"/></svg></button>`).join("")}
        </div>
        ${label(name)}
      </div>${separator}`).join("") + `
      <div class="pt-[2px] w-[72px] flex flex-col items-center">
        <button aria-label="select" class="size-[38px] bg-[#0696d7]"><svg class="block size-[38px]" viewBox="0 0 114 114"><path d="M10 10h83v64H10z" fill="none" stroke="#6be08a" stroke-width="3" stroke-dasharray="12 5"/><path d="M72 52v42l10-8 7 18 10-4-8-17h12z" fill="#fff"/></svg></button>
        ${label("SELECT")}
      </div>`;

    // Browser tree: level, name, type, open/closed, visibility
    const nodes = [
      [1, "Document Settings", "gear", "closed", ""],
      [1, "Named Views", "folder", "closed", ""],
      [1, "Origin", "folder", "closed", "eyeoff"],
      [1, "Bodies", "folder", "open", "eye"],
      [2, "Body2", "body", "", "eye"],
      [2, "Body3", "body", "", "eyeoff"],
      [1, "Sketches", "folder", "open", "eyeoff"],
      [2, "Sketch1", "locked", "", "eyeoff"],
      [2, "Sketch2", "locked", "", "eyeoff"],
      [2, "Sketch7", "sketch", "", "eyeoff"],
      [2, "Sketch3", "sketch", "", "eyeoff"],
      [2, "Sketch4", "locked", "", "eyeoff"],
      [2, "Sketch5", "locked", "", "eyeoff"],
      [2, "Sketch6", "locked", "", "eyeoff"],
      [1, "Construction", "folder", "closed", "eyeoff"],
    ];
    const arrow = (state) => state === "open"
      ? '<svg class="w-[12px] h-[12px]"><use href="#i-open"/></svg>'
      : '<svg class="w-[10px] h-[14px]"><use href="#i-closed"/></svg>';
    document.getElementById("tree").innerHTML = `
      <li class="h-6 flex items-center pl-[17px]">
        <button aria-label="Collapse root">${arrow("open")}</button>
        <div class="ml-[7px] h-5 w-[184px] flex items-center bg-[#f2f2f2]">
          <svg class="ml-[3px] w-4 h-[11px]"><use href="#i-eye"/></svg>
          <div class="ml-[6px] w-[134px] h-4 flex items-center bg-[#959595] text-white font-bold">
            <svg class="ml-[3px] size-4" viewBox="0 0 48 48"><path d="M2 14L14 2h32v30L34 46H2z" fill="#fff" stroke="#333c4a" stroke-width="3" stroke-linejoin="round"/><path d="M34 14L46 2v30L34 46z" fill="#b9bdca"/><path d="M4 14h30v30H4z" fill="#eceef3"/></svg>
            <span class="ml-[13px] whitespace-nowrap">Hood Scoop 1 v7</span>
          </div>
          <svg class="ml-1 size-[13px]" viewBox="0 0 13 13"><circle cx="6.500" cy="6.500" r="5.800" fill="#fff" stroke="#333" stroke-width="1.200"/><circle cx="6.500" cy="6.500" r="2.200" fill="#222"/></svg>
        </div>
      </li>` + nodes.map(([level, name, type, state, eye]) => `
      <li class="h-6 flex items-center ${level === 1 ? "pl-[35px]" : "pl-[72px]"}">
        ${level === 1 ? `<button aria-label="Toggle ${name}" class="w-[19px] flex pl-px">${arrow(state)}</button>` : ""}
        <div class="h-5 pr-[11px] flex items-center bg-[#f2f2f2]">
          ${eye ? `<span class="w-[22px] grid place-items-center"><svg class="w-4 h-[11px]"><use href="#i-${eye}"/></svg></span>` : ""}
          <span class="grid place-items-center ${eye ? "w-[28px] mr-[7px]" : "w-[22px] mr-[10px]"}"><svg class="size-4"><use href="#i-${type}"/></svg></span>
          <span>${name}</span>
        </div>
      </li>`).join("");

    // Timeline features in order
    const features = ("sketch extrude fillet fillet shell sketch extrude extrude sketch extrude extrude fillet fillet fillet " +
      "sketch extrude construct split sketch extrude chamfer combine extrude chamfer thread construct extrude split " +
      "sketch sketch extrude extrude fillet fillet").split(" ");
    const failed = 13;
    document.getElementById("timeline").innerHTML = features.map((f, n) => `
      <div class="w-6 flex flex-col items-center">
        <button aria-label="${f}" class="size-6 grid place-items-center rounded-sm ${n === failed ? "bg-[#ff4343]" : ""}"><svg class="size-4"><use href="#i-${f}"/></svg></button>
        <span class="w-[2px] h-1 bg-[#c9c9c9]"></span>
        <span class="h-[2px] bg-[#c9c9c9] ${n === 0 ? "w-3 self-end" : n === features.length - 1 ? "w-3 self-start" : "w-6"}"></span>
      </div>`).join("");

    // Ground plane grid, projected with the camera's perspective
    const project = (i, j) => {
      const w = 1 + 0.0023 * i - 0.01725 * j;
      return [(676 + 37.53 * i + 4.81 * j) / w, (401 - 17.594 * i + 21.39 * j) / w];
    };
    const line = (a, b) => {
      const [x1, y1] = project(...a), [x2, y2] = project(...b);
      return `M${x1.toFixed(1)} ${y1.toFixed(1)}L${x2.toFixed(1)} ${y2.toFixed(1)}`;
    };
    let minor = "", major = "";
    const div = 5, size = 45;
    for (let n = -size * div; n <= size * div; n++) {
      const k = n / div;
      let d = line([k, -size], [k, 40]);
      if (k <= 40) d += line([-size, k], [size, k]);
      if (n % div === 0) major += d; else minor += d;
    }
    document.getElementById("gridMinor").setAttribute("d", minor);
    document.getElementById("gridMajor").setAttribute("d", major);
  </script>
</body>
</html>
